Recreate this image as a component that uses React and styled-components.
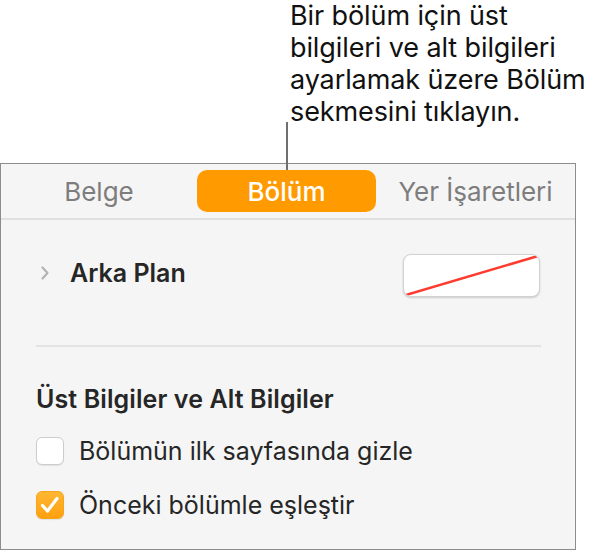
import React from "react";
import styled, { createGlobalStyle } from "styled-components";

const GlobalStyle = createGlobalStyle`
  html, body {
    margin: 0;
    padding: 0;
    background: #fff;
  }
  body {
    font-family: Inter, "Noto Sans", "Liberation Sans", sans-serif;
    -webkit-font-smoothing: antialiased;
  }
`;

const Page = styled.div`
  position: relative;
  width: 604px;
  height: 551px;
  overflow: hidden;
`;

const Callout = styled.p`
  margin: 0;
  padding-left: 290px;
  font-size: 27px;
  line-height: 32px;
  color: #111;
  letter-spacing: -0.1px;
`;

const Leader = styled.div`
  position: absolute;
  left: 286px;
  top: 122px;
  width: 1.5px;
  height: 48px;
  background: #6f6f6f;
  z-index: 2;
`;

const Panel = styled.div`
  margin-top: 35px;
  width: 574px;
  height: 385px;
  background: #f5f5f5;
  border: 1px solid #8c8c8c;
`;

const TabBar = styled.div`
  display: grid;
  grid-template-columns: 196px 179px 1fr;
  align-items: center;
  padding: 6px 0 6px;
  border-bottom: 2px solid #e0e0e0;
`;

const Tab = styled.div`
  height: 42px;
  display: flex;
  align-items: center;
  justify-content: center;
  border-radius: 10px;
  font-size: 26px;
  font-weight: ${(p) => (p.$active ? 500 : 400)};
  color: ${(p) => (p.$active ? "#fff" : "#7d7d7d")};
  background: ${(p) => (p.$active ? "#ff9a00" : "transparent")};
`;

const Body = styled.div`
  padding: 0 34px 0 35px;
`;

const BgRow = styled.div`
  display: flex;
  align-items: center;
  margin-top: 34px;
  height: 43px;
`;

const Chevron = styled.svg`
  width: 10px;
  height: 16px;
  margin-left: 4px;
  margin-right: 20px;
  margin-bottom: 5px;
`;

const RowTitle = styled.span`
  font-size: 25px;
  font-weight: 600;
  color: #262626;
  flex: 1;
  margin-bottom: 6px;
`;

const ColorWell = styled.div`
  width: 135px;
  height: 41px;
  border-radius: 8px;
  background: #fff;
  border: 1px solid #d2d2d2;
  box-shadow: 0 1px 2px rgba(0, 0, 0, 0.18);
  overflow: hidden;
  margin-right: 1px;

  svg {
    display: block;
    width: 100%;
    height: 100%;
  }
`;

const Divider = styled.div`
  margin-top: 48px;
  height: 2px;
  background: #e2e2e2;
`;

const SectionTitle = styled.h3`
  margin: 39px 0 0;
  font-size: 25px;
  line-height: 26px;
  font-weight: 600;
  color: #262626;
  letter-spacing: 0.1px;
`;

const CheckList = styled.div`
  display: flex;
  flex-direction: column;
  gap: 24px;
  margin-top: 24px;
`;

const CheckRow = styled.label`
  display: flex;
  align-items: center;
  gap: 15px;
  font-size: 25px;
  color: #262626;
`;

const Box = styled.span`
  width: 28px;
  height: 28px;
  box-sizing: border-box;
  border-radius: 6px;
  display: flex;
  align-items: center;
  justify-content: center;
  background: ${(p) =>
    p.$checked ? "linear-gradient(#ffb732, #ffa00f)" : "#fff"};
  border: 1px solid ${(p) => (p.$checked ? "#f8a41c" : "#cdcdcd")};
  box-shadow: 0 1px 1px rgba(0, 0, 0, 0.08);
`;

function Checkbox({ checked, children }) {
  return (
    <CheckRow>
      <Box $checked={checked}>
        {checked && (
          <svg width="20" height="18" viewBox="0 0 20 18">
            <path
              d="M2.5 9.5 L7.5 15 L17 2.5"
              fill="none"
              stroke="#fff"
              strokeWidth="3.2"
              strokeLinecap="round"
              strokeLinejoin="round"
            />
          </svg>
        )}
      </Box>
      {children}
    </CheckRow>
  );
}

export default function App() {
  return (
    <Page>
      <GlobalStyle />
      <Callout>
        Bir bölüm için üst
        <br />
        bilgileri ve alt bilgileri
        <br />
        ayarlamak üzere Bölüm
        <br />
        sekmesini tıklayın.
      </Callout>
      <Leader />
      <Panel>
        <TabBar>
          <Tab>Belge</Tab>
          <Tab $active>Bölüm</Tab>
          <Tab>Yer İşaretleri</Tab>
        </TabBar>
        <Body>
          <BgRow>
            <Chevron viewBox="0 0 10 16">
              <path
                d="M2.5 2.5 L7.5 8 L2.5 13.5"
                fill="none"
                stroke="#b3b3b3"
                strokeWidth="2.2"
                strokeLinecap="round"
                strokeLinejoin="round"
              />
            </Chevron>
            <RowTitle>Arka Plan</RowTitle>
            <ColorWell>
              <svg viewBox="0 0 135 41" preserveAspectRatio="none">
                <line x1="2" y1="40" x2="134" y2="1" stroke="#ff3b30" strokeWidth="2.5" />
              </svg>
            </ColorWell>
          </BgRow>
          <Divider />
          <SectionTitle>Üst Bilgiler ve Alt Bilgiler</SectionTitle>
          <CheckList>
            <Checkbox>Bölümün ilk sayfasında gizle</Checkbox>
            <Checkbox checked>Önceki bölümle eşleştir</Checkbox>
          </CheckList>
        </Body>
      </Panel>
    </Page>
  );
}
